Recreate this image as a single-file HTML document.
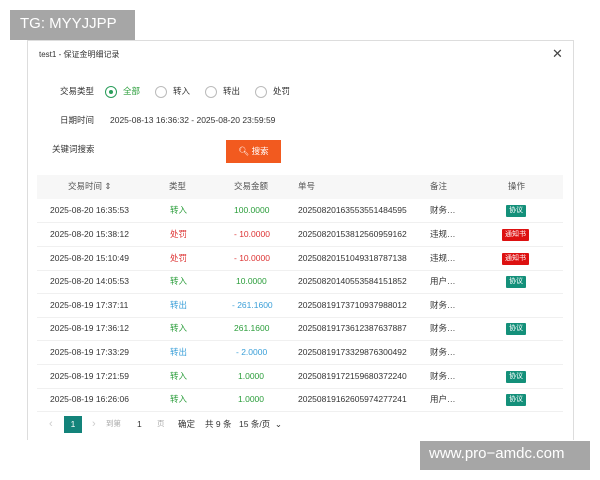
<!DOCTYPE html>
<html><head><meta charset="utf-8"><style>
*{margin:0;padding:0;box-sizing:border-box}
body{width:600px;height:480px;background:#fff;position:relative;overflow:hidden;font-family:"Liberation Sans","Noto Sans CJK SC",sans-serif;font-size:8.5px;color:#333;line-height:1.1}
.a{position:absolute;white-space:nowrap}
.dlg{position:absolute;left:27px;top:40px;width:547px;height:400px;border:1px solid #ddd;border-bottom:none;background:#fff}
.wm{position:absolute;background:#a6a6a6;color:#fff;font-size:15px}
.row{position:absolute;left:37px;width:526px;height:23.6px;border-bottom:1px solid #f0f0f0}
.row span{position:absolute;top:7px;white-space:nowrap}
.g{color:#2a9d3a}.r{color:#d33}.b{color:#3a9fd8}
.tag{position:absolute;color:#fff;font-size:7px;padding:2px 3px;border-radius:1px}
.radio{position:absolute;width:12px;height:12px;border:1px solid #bbb;border-radius:50%}
</style></head><body>
<div class="wm" style="left:10px;top:10px;width:125px;height:30px;padding:6px 0 0 10px">TG: MYYJJPP</div>
<div class="dlg"></div>
<div class="a" style="left:39px;top:51px;font-size:8px">test1 - 保证金明细记录</div>
<div class="a" style="left:552px;top:47px;font-size:13px;color:#444">✕</div>
<div class="a" style="left:60px;top:87px">交易类型</div>
<div class="radio" style="left:105px;top:86px;border-color:#2a9d5a"><div style="position:absolute;left:3px;top:3px;width:4px;height:4px;border-radius:50%;background:#2a9d5a"></div></div>
<div class="a g" style="left:123px;top:87px">全部</div>
<div class="radio" style="left:155px;top:86px"></div><div class="a" style="left:173px;top:87px">转入</div>
<div class="radio" style="left:205px;top:86px"></div><div class="a" style="left:223px;top:87px">转出</div>
<div class="radio" style="left:255px;top:86px"></div><div class="a" style="left:273px;top:87px">处罚</div>
<div class="a" style="left:60px;top:116px">日期时间</div>
<div class="a" style="left:110px;top:116px">2025-08-13 16:36:32 - 2025-08-20 23:59:59</div>
<div class="a" style="left:52px;top:145px">关键词搜索</div>
<div class="a" style="left:226px;top:140px;width:55px;height:23px;background:#f25a1f;color:#fff;text-align:center;line-height:23px">🔍︎ 搜索</div>
<div class="a" style="left:37px;top:175px;width:526px;height:24px;background:#f7f7f7"></div>
<div class="a" style="left:68px;top:182px;color:#555">交易时间 ⇕</div>
<div class="a" style="left:169px;top:182px;color:#555">类型</div>
<div class="a" style="left:234px;top:182px;color:#555">交易金额</div>
<div class="a" style="left:298px;top:182px;color:#555">单号</div>
<div class="a" style="left:430px;top:182px;color:#555">备注</div>
<div class="a" style="left:508px;top:182px;color:#555">操作</div>

<div class="row" style="top:199px"><span style="left:13px">2025-08-20 16:35:53</span><span class="g" style="left:133px">转入</span><span class="g" style="left:197px">100.0000</span><span style="left:261px">20250820163553551484595</span><span style="left:393px">财务…</span><span class="tag" style="left:469px;top:6px;background:#14907a">协议</span></div>
<div class="row" style="top:223px"><span style="left:13px">2025-08-20 15:38:12</span><span class="r" style="left:133px">处罚</span><span class="r" style="left:197px">- 10.0000</span><span style="left:261px">20250820153812560959162</span><span style="left:393px">违规…</span><span class="tag" style="left:465px;top:6px;background:#d11">通知书</span></div>
<div class="row" style="top:247px"><span style="left:13px">2025-08-20 15:10:49</span><span class="r" style="left:133px">处罚</span><span class="r" style="left:197px">- 10.0000</span><span style="left:261px">20250820151049318787138</span><span style="left:393px">违规…</span><span class="tag" style="left:465px;top:6px;background:#d11">通知书</span></div>
<div class="row" style="top:270px"><span style="left:13px">2025-08-20 14:05:53</span><span class="g" style="left:133px">转入</span><span class="g" style="left:199px">10.0000</span><span style="left:261px">20250820140553584151852</span><span style="left:393px">用户…</span><span class="tag" style="left:469px;top:6px;background:#14907a">协议</span></div>
<div class="row" style="top:294px"><span style="left:13px">2025-08-19 17:37:11</span><span class="b" style="left:133px">转出</span><span class="b" style="left:195px">- 261.1600</span><span style="left:261px">20250819173710937988012</span><span style="left:393px">财务…</span></div>
<div class="row" style="top:317px"><span style="left:13px">2025-08-19 17:36:12</span><span class="g" style="left:133px">转入</span><span class="g" style="left:197px">261.1600</span><span style="left:261px">20250819173612387637887</span><span style="left:393px">财务…</span><span class="tag" style="left:469px;top:6px;background:#14907a">协议</span></div>
<div class="row" style="top:341px"><span style="left:13px">2025-08-19 17:33:29</span><span class="b" style="left:133px">转出</span><span class="b" style="left:199px">- 2.0000</span><span style="left:261px">20250819173329876300492</span><span style="left:393px">财务…</span></div>
<div class="row" style="top:365px"><span style="left:13px">2025-08-19 17:21:59</span><span class="g" style="left:133px">转入</span><span class="g" style="left:201px">1.0000</span><span style="left:261px">20250819172159680372240</span><span style="left:393px">财务…</span><span class="tag" style="left:469px;top:6px;background:#14907a">协议</span></div>
<div class="row" style="top:388px"><span style="left:13px">2025-08-19 16:26:06</span><span class="g" style="left:133px">转入</span><span class="g" style="left:201px">1.0000</span><span style="left:261px">20250819162605974277241</span><span style="left:393px">用户…</span><span class="tag" style="left:469px;top:6px;background:#14907a">协议</span></div>

<div class="a" style="left:49px;top:418px;color:#ccc;font-size:11px">‹</div>
<div class="a" style="left:64px;top:416px;width:18px;height:17px;background:#13837a;color:#fff;text-align:center;line-height:17px">1</div>
<div class="a" style="left:92px;top:418px;color:#ccc;font-size:11px">›</div>
<div class="a" style="left:106px;top:420px;color:#aaa;font-size:7.5px">到第</div>
<div class="a" style="left:137px;top:420px">1</div>
<div class="a" style="left:157px;top:420px;color:#aaa;font-size:7.5px">页</div>
<div class="a" style="left:178px;top:420px">确定</div>
<div class="a" style="left:205px;top:420px">共 9 条</div>
<div class="a" style="left:239px;top:420px">15 条/页 &nbsp;⌄</div>
<div class="wm" style="left:420px;top:441px;width:170px;height:29px;padding:5px 0 0 9px">www.pro−amdc.com</div>
</body></html>
